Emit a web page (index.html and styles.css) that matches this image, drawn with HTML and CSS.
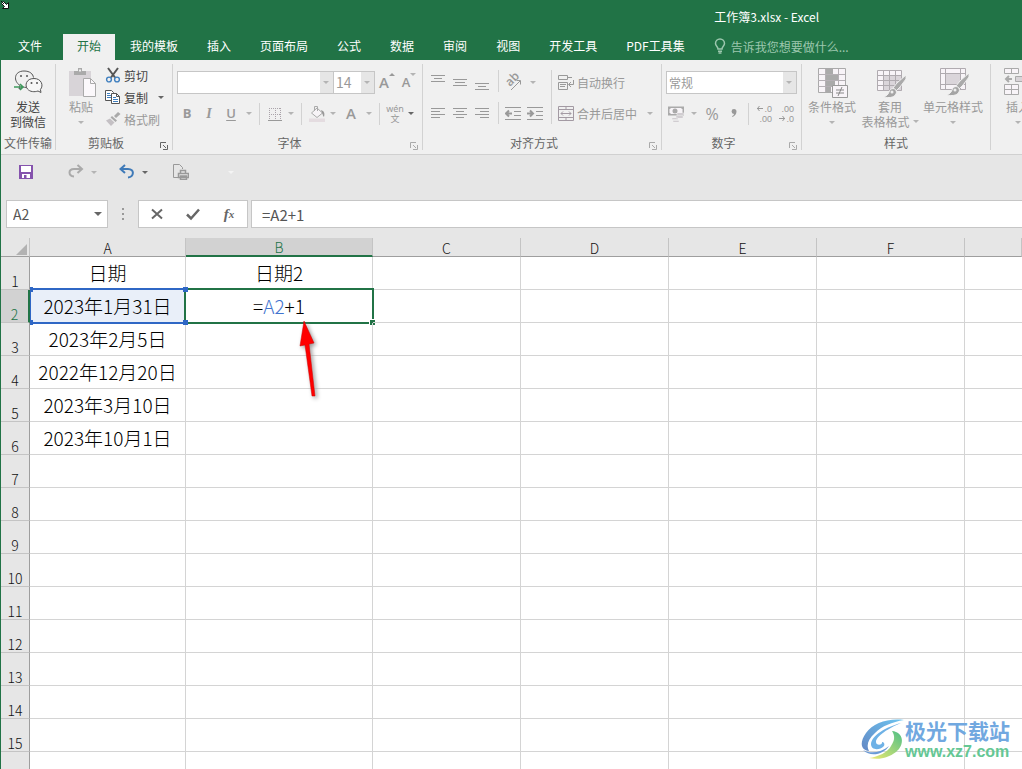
FILE: index.html
```html
<!DOCTYPE html>
<html lang="zh-CN">
<head>
<meta charset="utf-8">
<title>工作簿3.xlsx - Excel</title>
<link rel="stylesheet" href="styles.css">
</head>
<body>
<div class="app">
  <header class="top">
    <svg class="cursor" viewBox="0 0 10 10" aria-hidden="true"><path d="M0 0l4 4M8.500 2.500v6H2.500L4.500 6.500 1.500 3.500 3.500 1.500 6.500 4.500z" fill="#fff" stroke="#111"/></svg>
    <h1 class="title">工作簿3.xlsx - Excel</h1>
    <nav class="tabs">
      <button class="tab file">文件</button>
      <button class="tab active">开始</button>
      <button class="tab">我的模板</button>
      <button class="tab">插入</button>
      <button class="tab">页面布局</button>
      <button class="tab">公式</button>
      <button class="tab">数据</button>
      <button class="tab">审阅</button>
      <button class="tab">视图</button>
      <button class="tab">开发工具</button>
      <button class="tab">PDF工具集</button>
      <label class="tell">
        <svg width="12" height="16" viewBox="0 0 12 16" fill="none" stroke="#9cc7ae" stroke-width="1.500"><path d="M4 11C4 8.500 1.500 8 1.500 5.500a4.500 4.500 0 0 1 9 0C10.500 8 8 8.500 8 11zM4 13.200h4M4.500 15h3"/></svg>
        <input type="text" aria-label="告诉我您想要做什么" placeholder="告诉我您想要做什么...">
      </label>
    </nav>
  </header>

  <section class="ribbon" aria-label="开始">
    <div class="group g-send">
      <div class="body">
        <button class="big dark">
          <svg width="32" height="32" viewBox="0 0 32 32" fill="none" stroke="#555"><path d="M17 20c-2 .6-4 .5-6 0l-4 2 1-3.500C1 14 2 4 12 4c6 0 9 3 9.500 6.500"/><path d="M26 24l3 1.500-.6-3c3.500-4 1-11-6.400-11-8 0-9.500 7-6.500 10.500 2.500 3 7 3.200 10.500 2z" fill="#f7f7f7"/><circle cx="9" cy="9" r="1" fill="#555" stroke="none"/><circle cx="15" cy="9" r="1" fill="#555" stroke="none"/><circle cx="19.500" cy="16" r="1" fill="#555" stroke="none"/><circle cx="25" cy="16" r="1" fill="#555" stroke="none"/><path d="M2 20h9M8 17l3 3-3 3" stroke="#3f9a5d" stroke-width="1.500"/></svg>
          <span>发送</span><span>到微信</span>
        </button>
      </div>
      <div class="label"><span>文件传输</span></div>
    </div>

    <div class="group g-clip">
      <div class="body">
        <button class="big paste">
          <svg width="32" height="32" viewBox="0 0 32 32"><path d="M4 4h22v25H4z" fill="#d8d4d8"/><path d="M9 8V4h4V1h4v3h4v4z" fill="#aaa"/><path d="M14 2.500h2v2h-2z" fill="#f0f0f0"/><path d="M18.500 11.500h7l5 5v13h-12z" fill="#fbf8fb" stroke="#aaa"/><path d="M25.500 11.500v5h5" fill="none" stroke="#aaa"/></svg>
          <span>粘贴</span><i class="caret"></i>
        </button>
        <div class="list">
          <button class="item dark"><svg width="16" height="16" viewBox="0 0 16 16" fill="none"><path d="M3 1l7 9.500M13 1L6 10.500" stroke="#555" stroke-width="2"/><circle cx="4" cy="12.500" r="2.400" stroke="#3f7fbf" stroke-width="1.400"/><circle cx="12" cy="12.500" r="2.400" stroke="#3f7fbf" stroke-width="1.400"/></svg>剪切</button>
          <button class="item dark"><svg width="16" height="16" viewBox="0 0 16 16"><path d="M.5 1.500h6l2 2v8h-8z" fill="#fff" stroke="#555"/><path d="M2 4.500h3M2 6.500h4M2 8.500h4" stroke="#3f7fbf"/><path d="M6.500 4.500h5l3 3v7h-8z" fill="#fff" stroke="#555"/><path d="M11.500 4.500v3h3" fill="none" stroke="#555"/><path d="M8 8.500h3M8 10.500h5M8 12.500h5" stroke="#3f7fbf"/></svg>复制<i class="caret far"></i></button>
          <button class="item"><svg width="16" height="16" viewBox="0 0 16 16" fill="#aaa"><path d="M9 5l4-4 2.500 2L11 7zM7 5l5 4.500-1.500 1.500-5-4.500z"/><path d="M5 7.500l4.500 4L6 15 1 9.500z" fill="#c4c0c4"/></svg>格式刷</button>
        </div>
      </div>
      <div class="label"><span>剪贴板</span><button class="launch on" aria-label="剪贴板选项"><svg width="8" height="8" viewBox="0 0 8 8" fill="none" stroke="currentColor"><path d="M.5 6V.5H6M3 3l3 3M7.500 3v4.500H3"/></svg></button></div>
    </div>

    <div class="group g-font">
      <div class="body rows">
        <div class="row">
          <span class="combos">
            <span class="combo font-name"><select aria-label="字体"><option></option></select><i class="caret"></i></span>
            <span class="combo font-size"><select aria-label="字号"><option>14</option></select><i class="caret"></i></span>
          </span>
          <button class="tool grow">A<i class="up"></i></button>
          <button class="tool shrink">A<i class="caret"></i></button>
        </div>
        <div class="row">
          <button class="tool b">B</button>
          <button class="tool i">I</button>
          <button class="tool u">U</button>
          <button class="drop" aria-label="下划线选项"><i class="caret"></i></button>
          <span class="sep"></span>
          <button class="icon" aria-label="边框"><svg width="16" height="16" viewBox="0 0 16 16" fill="none" stroke="#aaa3aa"><path d="M2 2.500h12M2 8.500h12M2.500 2v12M8.500 2v12M13.500 2v12" stroke-dasharray="1 1"/><path d="M1 14.500h14" stroke="#999"/></svg></button>
          <button class="drop" aria-label="边框选项"><i class="caret"></i></button>
          <span class="sep"></span>
          <button class="icon" aria-label="填充颜色"><svg width="16" height="16" viewBox="0 0 16 16"><path d="M0 12.500h16V16H0z" fill="#e4dce0"/><path d="M8 2l5.500 5L8 11.500 2.500 7z" fill="#f7f4f7" stroke="#aaa"/><path d="M5.500 5V.5h3V5" fill="none" stroke="#aaa"/><path d="M12 4c3 1 4 3 3 7-1.500-1-1-3-2-4z" fill="#999"/></svg></button>
          <button class="drop" aria-label="填充颜色选项"><i class="caret"></i></button>
          <button class="tool a">A</button>
          <button class="drop" aria-label="字体颜色选项"><i class="caret"></i></button>
          <span class="sep"></span>
          <button class="icon wen"><span>wén</span><span>文</span></button>
          <button class="drop on" aria-label="拼音选项"><i class="caret"></i></button>
        </div>
      </div>
      <div class="label"><span>字体</span><button class="launch" aria-label="字体选项"><svg width="8" height="8" viewBox="0 0 8 8" fill="none" stroke="currentColor"><path d="M.5 6V.5H6M3 3l3 3M7.500 3v4.500H3"/></svg></button></div>
    </div>

    <div class="group g-align">
      <div class="body">
        <div class="rows">
          <div class="row wide">
            <button class="icon" aria-label="顶端对齐"><svg width="16" height="16" viewBox="0 0 16 16" stroke="#999"><path d="M1 .5h14M4 3.500h8M1 6.500h14"/></svg></button>
            <button class="icon" aria-label="垂直居中"><svg width="16" height="16" viewBox="0 0 16 16" stroke="#999"><path d="M1 4.500h14M3 7.500h10M1 10.500h14"/></svg></button>
            <button class="icon" aria-label="底端对齐"><svg width="16" height="16" viewBox="0 0 16 16" stroke="#999"><path d="M1 8.500h14M4 11.500h8M1 14.500h14"/></svg></button>
          </div>
          <div class="row wide">
            <button class="icon" aria-label="左对齐"><svg width="16" height="16" viewBox="0 0 16 16" stroke="#999"><path d="M1 2.500h14M1 5.500h9M1 8.500h14M1 11.500h9"/></svg></button>
            <button class="icon" aria-label="居中"><svg width="16" height="16" viewBox="0 0 16 16" stroke="#999"><path d="M1 2.500h14M4 5.500h8M1 8.500h14M4 11.500h8"/></svg></button>
            <button class="icon" aria-label="右对齐"><svg width="16" height="16" viewBox="0 0 16 16" stroke="#999"><path d="M1 2.500h14M6 5.500h9M1 8.500h14M6 11.500h9"/></svg></button>
          </div>
        </div>
        <span class="vsep split"></span>
        <div class="rows">
          <div class="row">
            <button class="icon turn" aria-label="方向"><span>ab</span><svg width="12" height="12" viewBox="0 0 12 12" fill="none" stroke="#999"><path d="M1 11l9-9M6.500 1.500h4v4"/></svg></button>
            <i class="caret far"></i>
          </div>
          <div class="row wide">
            <button class="icon" aria-label="减少缩进"><svg width="16" height="16" viewBox="0 0 16 16" fill="none" stroke="#999"><path d="M0 1.500h16M9 5.500h7M9 9.500h7M0 13.500h16"/><path d="M1 7.500h6M4 4.500l-3 3 3 3" stroke-width="2"/></svg></button>
            <button class="icon" aria-label="增加缩进"><svg width="16" height="16" viewBox="0 0 16 16" fill="none" stroke="#999"><path d="M0 1.500h16M9 5.500h7M9 9.500h7M0 13.500h16"/><path d="M0 7.500h6M3 4.500l3 3-3 3" stroke-width="2"/></svg></button>
          </div>
        </div>
        <span class="vsep"></span>
        <div class="rows">
          <div class="row"><button class="item"><svg width="16" height="16" viewBox="0 0 16 16" fill="none" stroke="#999"><path d="M.5.5h9v4h-9zM9.500 2.500H14M.5 7.500h9v7h-9zM2 9.500h6M2 11.500h5M15.500 5v4.500H11M13 7l-2.500 2.500L13 12"/></svg>自动换行</button></div>
          <div class="row"><button class="item"><svg width="16" height="16" viewBox="0 0 16 16" fill="none" stroke="#a39aa3"><path d="M.5.5h15v14H.5zM.5 3.500h15M.5 11.500h15M8 .5v3M8 11.500v3M3 7.500h10M5 5.500l-2 2 2 2M11 5.500l2 2-2 2"/></svg>合并后居中<i class="caret far"></i></button></div>
        </div>
      </div>
      <div class="label"><span>对齐方式</span><button class="launch" aria-label="对齐方式选项"><svg width="8" height="8" viewBox="0 0 8 8" fill="none" stroke="currentColor"><path d="M.5 6V.5H6M3 3l3 3M7.500 3v4.500H3"/></svg></button></div>
    </div>

    <div class="group g-number">
      <div class="body rows">
        <div class="row"><span class="combo format"><select aria-label="数字格式"><option>常规</option></select><i class="caret"></i></span></div>
        <div class="row">
          <button class="tool" aria-label="会计数字格式"><svg width="18" height="16" viewBox="0 0 18 16"><path d="M1 .5h16v9H1z" fill="#aaa"/><path d="M4 2h10l1.500 1.500v3L14 8H4L2.500 6.500v-3z" fill="#f7f4f7"/><circle cx="8" cy="5" r="2.500" fill="#aaa"/><path d="M10 7h7v2h-7zM9 10h7v2H9zM5 12h6v1.500H5zM6 14.500h6V16H6z" fill="#c6c1c6" stroke="#f0f0f0" stroke-width=".5"/></svg></button>
          <button class="drop" aria-label="会计格式选项"><i class="caret"></i></button>
          <button class="tool pct">%</button>
          <button class="tool" aria-label="千位分隔样式"><svg width="8" height="12" viewBox="0 0 8 12"><path d="M4 1a2.500 2.500 0 0 1 2.500 2.500C6.500 6 5 8 2.500 9L2 8c1.300-.6 2-1.300 2-2.100A2.400 2.400 0 0 1 4 1z" fill="#999"/></svg></button>
          <span class="sep"></span>
          <button class="tool dec" aria-label="增加小数位数"><span class="line"><svg width="6" height="5" viewBox="0 0 6 5" fill="none" stroke="#999"><path d="M0 2.500h6M2.500 0L.5 2.500l2 2.500"/></svg>.0</span><span>.00</span></button>
          <button class="tool dec" aria-label="减少小数位数"><span>.00</span><span class="line"><svg width="6" height="5" viewBox="0 0 6 5" fill="none" stroke="#999"><path d="M0 2.500h6M3.500 0l2 2.500-2 2.500"/></svg>.0</span></button>
        </div>
      </div>
      <div class="label"><span>数字</span><button class="launch" aria-label="数字选项"><svg width="8" height="8" viewBox="0 0 8 8" fill="none" stroke="currentColor"><path d="M.5 6V.5H6M3 3l3 3M7.500 3v4.500H3"/></svg></button></div>
    </div>

    <div class="group g-style">
      <div class="body">
        <button class="big narrow">
          <svg width="32" height="32" viewBox="0 0 32 32"><path d="M2.500 1.500h27v24h-27z" fill="#f8f4f8" stroke="#aaa"/><path d="M10 2h7v5h-7zM10 8h12v5H10zM10 14h9v5h-9zM10 20h5v5h-5z" fill="#aaa"/><path d="M2 7.500h27M2 13.500h27M2 19.500h27M9.500 2v23M22.500 2v23" stroke="#b5b0b5"/><path d="M16.500 18.500h15v12h-15z" fill="#f8f4f8" stroke="#999"/><path d="M20 23h8M20 26h8M26 20l-4 9" stroke="#888"/></svg>
          <span>条件格式</span><i class="caret"></i>
        </button>
        <button class="big">
          <svg width="32" height="32" viewBox="0 0 32 32"><path d="M3.500 3.500h24v20h-24z" fill="#f8f4f8"/><path d="M10 9h18v15H10z" fill="#dad5da"/><path d="M3.500 3.500h24v20h-24zM3 8.500h25M3 13.500h25M3 18.500h25M9.500 3v21M15.500 3v21M21.500 3v21" fill="none" stroke="#b0abb0"/><path d="M32 8l-9 8-4 5 3 3 4-4 6-8z" fill="#aaa" stroke="#f0f0f0"/><path d="M21 22c-3-1-5 0-6 3s-3 4-5 5c4 1 10 1 12-3 1-2 0-4-1-5z" fill="#a5a5a5" stroke="#f0f0f0"/><circle cx="18" cy="25" r="1.500" fill="#eee"/></svg>
          <span>套用</span><span class="line">表格格式<i class="caret"></i></span>
        </button>
        <button class="big">
          <svg width="32" height="32" viewBox="0 0 32 32"><path d="M3.500 1.500h25v21h-25z" fill="#f8f4f8"/><path d="M8 6h16v11H8z" fill="#dad5da"/><path d="M3.500 1.500h25v21h-25zM3 6.500h26M3 17.500h26M8.500 2v21M23.500 2v21" fill="none" stroke="#b0abb0"/><path d="M32 6l-9 8-4 5 3 3 4-4 6-8z" fill="#aaa" stroke="#f0f0f0"/><path d="M21 20c-3-1-5 0-6 3s-3 4-5 5c4 1 10 1 12-3 1-2 0-4-1-5z" fill="#a5a5a5" stroke="#f0f0f0"/><circle cx="18" cy="23" r="1.500" fill="#eee"/></svg>
          <span>单元格样式</span><i class="caret"></i>
        </button>
      </div>
      <div class="label"><span>样式</span></div>
    </div>

    <div class="group g-cells">
      <div class="body">
        <button class="big">
          <svg width="32" height="32" viewBox="0 0 32 32" fill="#f8f4f8" stroke="#aaa"><path d="M2.500 1.500h14v5h-14zM9.500 2v5M2.500 17.500h14v10h-14zM2.500 22.500h14M9.500 18v10"/><path d="M13.500 9.500h12v5h-12z" fill="#d8d4d8"/><path d="M4 12h6M7 9l-3 3 3 3" fill="none" stroke-width="2"/></svg>
          <span>插入</span><i class="caret"></i>
        </button>
      </div>
    </div>
  </section>

  <div class="quick">
    <button class="icon" aria-label="保存"><svg width="16" height="16" viewBox="0 0 16 16"><path d="M1 1h14v14H1z" fill="#8553ad"/><path d="M3 2h10v6H3zM4 10h8v4H4z" fill="#fff"/><path d="M6 11h2.500v3H6z" fill="#8553ad"/></svg></button>
    <span class="pair"><button class="icon" aria-label="恢复"><svg width="16" height="16" viewBox="0 0 16 16" fill="none" stroke="#aaa" stroke-width="2"><path d="M9.500 1L14 5 9.500 9M14 5H6c-6 0-6 7 0 7.500"/></svg></button><button class="drop" aria-label="恢复选项"><i class="caret"></i></button></span>
    <span class="pair undo"><button class="icon" aria-label="撤消"><svg width="16" height="16" viewBox="0 0 16 16" fill="none" stroke="#3f7ab8" stroke-width="2"><path d="M6 1L1.500 5 6 9M1.500 5H9c7 0 6 8 0 8.500"/></svg></button><button class="drop on" aria-label="撤消选项"><i class="caret"></i></button></span>
    <button class="icon" aria-label="打印预览"><svg width="16" height="16" viewBox="0 0 16 16" fill="none" stroke="#999"><path d="M5 13.500H.5V.5h6l3 3V5"/><path d="M7.500 9V6.500h5V9M5.500 9.500h10v4h-10zM7.500 12h6v3.500h-6z" fill="#e6e6e6" stroke-width="1.500"/></svg></button>
    <button class="drop more" aria-label="自定义快速访问工具栏"><i class="caret"></i></button>
  </div>

  <div class="formula">
    <div class="name"><input type="text" aria-label="名称框" value="A2"><button class="drop on" aria-label="名称列表"><i class="caret"></i></button></div>
    <svg class="dots" width="2" height="12" viewBox="0 0 2 12" fill="#999"><path d="M0 0h2v2H0zM0 5h2v2H0zM0 10h2v2H0z"/></svg>
    <div class="edit">
      <button class="icon" aria-label="取消"><svg width="14" height="14" viewBox="0 0 14 14" stroke="#666" stroke-width="2"><path d="M2 2.500l10 9M12 2.500l-10 9"/></svg></button>
      <button class="icon" aria-label="输入"><svg width="14" height="14" viewBox="0 0 14 14" fill="none" stroke="#666" stroke-width="2.500"><path d="M1 7.500l4 4L13 2.500"/></svg></button>
      <button class="icon fx">f<sub>x</sub></button>
    </div>
    <input class="entry" type="text" aria-label="编辑栏" value="=A2+1">
  </div>

  <main class="sheet">
    <table class="grid">
      <colgroup><col class="c-num"><col class="c-a"><col class="c-b"><col class="c-n"><col class="c-n"><col class="c-n"><col class="c-n"><col></colgroup>
      <thead><tr><th class="corner"><svg width="12" height="12" viewBox="0 0 12 12"><path d="M12 0v11H1z" fill="#b2b2b2"/></svg></th><th>A</th><th class="sel">B</th><th>C</th><th>D</th><th>E</th><th>F</th><th></th></tr></thead>
      <tbody>
        <tr><th>1</th><td>日期</td><td>日期2</td><td></td><td></td><td></td><td></td><td></td></tr>
        <tr><th class="sel">2</th><td class="ref">2023年1月31日<span class="range"><i></i><i></i><i></i><i></i></span></td><td class="cur">=<span class="token">A2</span>+1<span class="box"></span>
          <svg class="arrow" viewBox="0 0 30 85" aria-hidden="true"><path d="M8 3L4 28l5-1 7 51h3L13 26l5-1z" fill="#f00" stroke="#c00" stroke-width=".5"/></svg></td><td></td><td></td><td></td><td></td><td></td></tr>
        <tr><th>3</th><td>2023年2月5日</td><td></td><td></td><td></td><td></td><td></td><td></td></tr>
        <tr><th>4</th><td>2022年12月20日</td><td></td><td></td><td></td><td></td><td></td><td></td></tr>
        <tr><th>5</th><td>2023年3月10日</td><td></td><td></td><td></td><td></td><td></td><td></td></tr>
        <tr><th>6</th><td>2023年10月1日</td><td></td><td></td><td></td><td></td><td></td><td></td></tr>
        <tr><th>7</th><td></td><td></td><td></td><td></td><td></td><td></td><td></td></tr>
        <tr><th>8</th><td></td><td></td><td></td><td></td><td></td><td></td><td></td></tr>
        <tr><th>9</th><td></td><td></td><td></td><td></td><td></td><td></td><td></td></tr>
        <tr><th>10</th><td></td><td></td><td></td><td></td><td></td><td></td><td></td></tr>
        <tr><th>11</th><td></td><td></td><td></td><td></td><td></td><td></td><td></td></tr>
        <tr><th>12</th><td></td><td></td><td></td><td></td><td></td><td></td><td></td></tr>
        <tr><th>13</th><td></td><td></td><td></td><td></td><td></td><td></td><td></td></tr>
        <tr><th>14</th><td></td><td></td><td></td><td></td><td></td><td></td><td></td></tr>
        <tr><th>15</th><td></td><td></td><td></td><td></td><td></td><td></td><td></td></tr>
        <tr><th></th><td></td><td></td><td></td><td></td><td></td><td></td><td></td></tr>
      </tbody>
    </table>
    <div class="mark">
      <svg width="44" height="44" viewBox="0 0 44 44" aria-hidden="true">
        <defs>
          <linearGradient id="sky" x1="1" y1="0" x2="0" y2="1"><stop offset="0" stop-color="#6cc4f0"/><stop offset="1" stop-color="#6488c4"/></linearGradient>
          <linearGradient id="leaf" x1="1" y1="0" x2="0" y2="1"><stop offset="0" stop-color="#4fbf86"/><stop offset="1" stop-color="#f0ea70"/></linearGradient>
        </defs>
        <path d="M43 2C27 0 12 5 5 15c-7 10-5 17 3 18-3-5-1-12 6-18C21 8 31 4 43 2z" fill="url(#sky)"/>
        <path d="M40 5C25 9 11 17 10 26c0 6 8 7 13 2 1-2 0-4-2-4 1 3-6 4-6 0 0-6 13-14 25-19z" fill="#6fb2e6"/>
        <path d="M31 13c12 1 13 14 4 21-8 6-16 8-27 6 9-1 19-6 22-12 4-6 4-10 1-15z" fill="url(#leaf)"/>
        <path d="M2 32c7 4 18 3 26-4-5 8-18 12-26 4z" fill="#6a9ad6"/>
      </svg>
      <div class="mark-text"><span class="cn">极光下载站</span><span class="url">www.xz7.com</span></div>
    </div>
  </main>
</div>
</body>
</html>
```
FILE: styles.css
```css
* { box-sizing: border-box; }
body { margin: 0; font: 12px/15px "Noto Sans CJK SC", sans-serif; color: #555; }
button, input, select { font: inherit; color: inherit; background: none; border: 0; padding: 0; margin: 0; border-radius: 0; }
button { display: flex; align-items: center; justify-content: center; white-space: nowrap; }
input, select { outline: 0; min-width: 0; }
svg { display: block; flex: none; }

.app { display: flex; flex-direction: column; height: 100vh; overflow: hidden; background: #e6e6e6; border-left: 1px solid #217346; }

/* title and tabs */
.top { position: relative; background: #217346; color: #fff; flex: none; }
.cursor { position: absolute; left: -1px; top: 0; width: 10px; height: 10px; }
.title { margin: 0; padding-left: 50%; font-size: 12px; font-weight: 400; line-height: 34px; text-align: center; }
.tabs { display: flex; gap: 1px; height: 26px; }
.tab { padding: 0 14px 4px; }
.file { padding: 0 20px 4px 17px; }
.active { background: #f0f0f0; color: #217346; }
.tell { display: flex; align-items: center; gap: 5px; padding: 0 0 2px 14px; color: #9cc7ae; flex: 1; }
.tell input { flex: 1; }
.tell input::placeholder { color: #9cc7ae; opacity: 1; }

/* ribbon */
.ribbon { display: flex; flex: none; height: 95px; padding: 4px 0; background: #f0f0f0; border-bottom: 1px solid #d0d0d0; overflow: hidden; color: #999; }
.group { display: flex; flex-direction: column; flex: none; border-right: 1px solid #d2d2d2; }
.g-send { width: 55px; }
.g-clip { width: 117px; }
.g-font { width: 250px; }
.g-align { width: 239px; }
.g-number { width: 140px; }
.g-style { width: 189px; }
.g-cells { width: 60px; border: 0; }
.body { display: flex; flex: 1; min-height: 0; }
.label { display: flex; align-items: center; height: 15px; color: #666; white-space: nowrap; }
.label span { flex: 1; text-align: center; }
.launch { width: 16px; height: 15px; align-items: flex-end; color: #aaa; }
.launch.on { color: #666; }
.dark { color: #444; }

.caret { display: block; border: 3px solid transparent; border-top-color: #b4b4b4; border-bottom: 0; flex: none; }
.on .caret, .dark .caret { border-top-color: #666; }
.far { margin-left: 7px; }

.big { flex-direction: column; justify-content: flex-start; width: 62px; padding-top: 3px; }
.big .caret { margin-top: 7px; }
.big .line { display: flex; align-items: center; gap: 3px; }
.big .line .caret { margin-top: 0; }
.g-send .big { width: 54px; }
.paste { width: 36px; margin: 0 6px 0 7px; }
.narrow { width: 52px; }
.g-style .body { padding-left: 4px; gap: 1px; }
.g-cells .big { width: 54px; }

.list { display: flex; flex-direction: column; }
.item { gap: 3px; height: 22px; justify-content: flex-start; }

.rows { display: flex; flex-direction: column; padding-top: 3px; }
.row { display: flex; align-items: center; gap: 2px; height: 31px; }
.row.wide { gap: 6px; }
.g-font .body, .g-number .body { padding-left: 4px; }
.g-align .body { padding-left: 7px; }
.sep { width: 1px; height: 22px; margin: 0 5px 0 2px; background: #d2d2d2; }
.vsep { width: 1px; height: 54px; margin: 6px 6px 0 8px; background: #d2d2d2; }
.vsep.split { background: linear-gradient(#d2d2d2 22px, transparent 22px 32px, #d2d2d2 32px); }
.tool { width: 20px; height: 22px; }
.icon { width: 16px; height: 22px; flex: none; }
.drop { width: 12px; height: 22px; flex: none; }

.combos { display: flex; }
.combo { display: flex; align-items: center; height: 23px; border: 1px solid #c6c6c6; padding-right: 4px; background: linear-gradient(to left, #e6e6e6 13px, #fff 13px); }
.combo select { appearance: none; flex: 1; height: 21px; padding-left: 2px; margin-right: 3px; }
.combo .caret { pointer-events: none; }
.font-name { width: 157px; }
.font-size { width: 41px; font-size: 14px; border-left: 0; }
.format { width: 131px; }

.grow, .shrink, .a, .b, .u { font-family: "Open Sans", sans-serif; font-weight: 600; }
.grow { font-size: 15px; }
.shrink { font-size: 13px; }
.grow i, .shrink i { align-self: flex-start; margin-top: 1px; }
.up { border: 3px solid transparent; border-bottom-color: #999; border-top: 0; }
.b { font-weight: 700; font-size: 13px; }
.i { font: italic 700 14px/18px "Liberation Serif", serif; }
.u { text-decoration: underline; text-underline-offset: 2px; font-size: 13px; }
.a { font-size: 15px; }
.wen { flex-direction: column; font: 9px/10px "Noto Sans", "Noto Sans CJK SC", sans-serif; }
.turn { position: relative; align-items: flex-start; justify-content: flex-start; }
.turn span { transform: rotate(-45deg); font: 600 12px/14px "Open Sans", sans-serif; }
.turn svg { position: absolute; right: -1px; bottom: 3px; }
.pct { font: 16px/18px "Open Sans", sans-serif; }
.dec { flex-direction: column; align-items: flex-end; font: 9px/10px "Liberation Sans", sans-serif; padding-right: 4px; }
.dec .line { display: flex; align-items: center; gap: 1px; }

/* quick access */
.quick { display: flex; align-items: center; flex: none; height: 34px; padding-left: 17px; }
.pair { display: flex; gap: 4px; margin-left: 34px; }
.pair.undo { margin-left: 19px; }
.undo + .icon { margin-left: 22px; }
.more { margin-left: 36px; }
.more .caret { border-top-color: #f4f4f4; }

/* formula bar */
.formula { display: flex; align-items: center; flex: none; padding: 11px 0 10px 5px; font-size: 14px; }
.name { display: flex; align-items: center; width: 102px; height: 28px; padding: 0 3px 0 6px; background: #fff; border: 1px solid #c6c6c6; }
.name input { flex: 1; }
.name .caret { border-width: 4px 4px 0; }
.dots { margin: 0 14px; }
.edit { display: flex; align-items: center; justify-content: space-between; width: 110px; height: 28px; padding: 0 10px; background: #fff; border: 1px solid #c6c6c6; }
.fx { font: italic 700 15px/18px "Liberation Serif", serif; color: #666; }
.fx sub { font-size: 11px; }
.entry { flex: 1; height: 28px; margin-left: 3px; padding-left: 10px; background: #fff; border: 1px solid #c6c6c6; border-right: 0; font-size: 15px; }

/* sheet */
.sheet { position: relative; flex: 1; min-height: 0; overflow: hidden; }
.grid { width: 100%; table-layout: fixed; border-spacing: 0; background: #fff; color: #000; }
.c-num { width: 29px; }
.c-a { width: 156px; }
.c-b { width: 187px; }
.c-n { width: 148px; }
.grid th { padding: 0; background: #e6e6e6; border: 0 solid #9e9e9e; font-size: 14px; font-weight: 300; line-height: 16px; color: #111; }
.grid thead th { height: 19px; border-right: 1px solid #c4c4c4; border-bottom: 1px solid #9e9e9e; vertical-align: bottom; }
.grid tbody th { height: 33px; border-right-width: 1px; border-bottom: 1px solid #c4c4c4; vertical-align: bottom; }
.grid .corner svg { margin-left: 14px; }
.grid th.sel { background: #d2d2d2; color: #217346; }
.grid thead th.sel { border-bottom: 2px solid #217346; }
.grid tbody th.sel { border-right: 2px solid #217346; }
.grid td { position: relative; height: 33px; padding: 0; border: 0 solid #d4d4d4; border-width: 0 1px 1px 0; font-size: 19px; font-weight: 300; line-height: 24px; text-align: center; }
.grid td:last-child { border-right: 0; }
.grid td.ref { background: #e9eff9; }
.token { color: #3f74cf; }
.range { position: absolute; inset: -2px 0 -2px 0; border: 2px solid #2f67c5; border-right: 0; border-left: 1px solid #2f67c5; z-index: 1; }
.range i { position: absolute; width: 5px; height: 5px; background: #2f67c5; }
.range i:nth-child(1) { left: -1px; top: -3px; width: 3px; }
.range i:nth-child(2) { right: -3px; top: -3px; }
.range i:nth-child(3) { left: -1px; bottom: -3px; width: 3px; }
.range i:nth-child(4) { right: -3px; bottom: -3px; }
.box { position: absolute; inset: -2px; border: 2px solid #217346; }
.box::after { content: ""; position: absolute; right: -3px; bottom: -3px; width: 5px; height: 5px; background: #217346; outline: 1px solid #fff; }
.arrow { position: absolute; left: 110px; top: 28px; width: 30px; height: 85px; z-index: 4; filter: drop-shadow(2px 2px 2px #999); }

.mark { position: absolute; right: 11px; bottom: 7px; display: flex; align-items: center; }
.mark-text { display: flex; flex-direction: column; width: 106px; white-space: nowrap; }
.cn { font-size: 21px; line-height: 24px; font-weight: 700; color: #71a8e0; }
.url { font: 700 16px/20px "Liberation Sans", sans-serif; color: #65c794; }
```
